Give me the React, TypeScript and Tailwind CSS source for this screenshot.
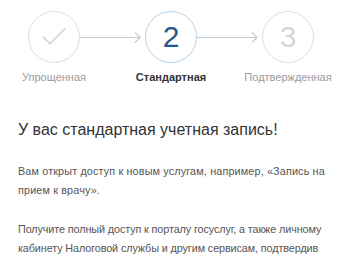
import { Check } from "lucide-react";

function Arrow() {
  return (
    <div className="relative h-px flex-1 bg-[#c9c9c9]">
      <svg
        className="absolute -right-[1px] -top-[5px]"
        width="7"
        height="11"
        viewBox="0 0 7 11"
        fill="none"
        stroke="#c9c9c9"
        strokeWidth="1.2"
      >
        <path d="M1 0.5 L6 5.5 L1 10.5" />
      </svg>
    </div>
  );
}

function Step({ label, active, children }: { label: string; active?: boolean; children: React.ReactNode }) {
  return (
    <div className="flex w-[52px] shrink-0 flex-col items-center">
      <div
        className={`flex h-[52px] w-[52px] items-center justify-center rounded-full border ${
          active ? "border-[#b9d2e6] text-[#1f5a8c]" : "border-[#dedede] text-[#d6d6d6]"
        }`}
      >
        {children}
      </div>
      <div
        className={`mt-[7px] whitespace-nowrap text-[11px] leading-[14px] ${
          active ? "font-semibold text-[#333]" : "text-[#9b9b9b]"
        }`}
      >
        {label}
      </div>
    </div>
  );
}

export default function App() {
  return (
    <div className="h-[260px] w-[358px] overflow-hidden bg-white font-['Liberation_Sans',Arial,sans-serif]">
      <div className="flex items-start pl-[28px] pr-[44px] pt-[11px]">
        <Step label="Упрощенная">
          <Check className="h-[32px] w-[32px] text-[#d0d0d0]" strokeWidth={1.1} />
        </Step>
        <div className="flex h-[52px] flex-1 items-center pr-[5px]">
          <Arrow />
        </div>
        <Step label="Стандартная" active>
          <span className="text-[30px] font-light leading-none">2</span>
        </Step>
        <div className="flex h-[52px] flex-1 items-center pr-[5px]">
          <Arrow />
        </div>
        <Step label="Подтвержденная">
          <span className="text-[30px] font-light leading-none">3</span>
        </Step>
      </div>
      <div className="pl-[18px] pr-[10px] pt-[35px] text-[#555]">
        <h1 className="text-[16px] leading-[22px] text-[#333]">У вас стандартная учетная запись!</h1>
        <div className="whitespace-nowrap text-[10.8px] leading-[19px]">
          <p className="mt-[21px] tracking-[0.15px]">
            Вам открыт доступ к новым услугам, например, «Запись на
            <br />
            прием к врачу».
          </p>
          <p className="mt-[20px] tracking-[-0.1px]">
            Получите полный доступ к порталу госуслуг, а также личному
            <br />
            кабинету Налоговой службы и другим сервисам, подтвердив
            <br />
            учетную запись.
          </p>
        </div>
      </div>
    </div>
  );
}
